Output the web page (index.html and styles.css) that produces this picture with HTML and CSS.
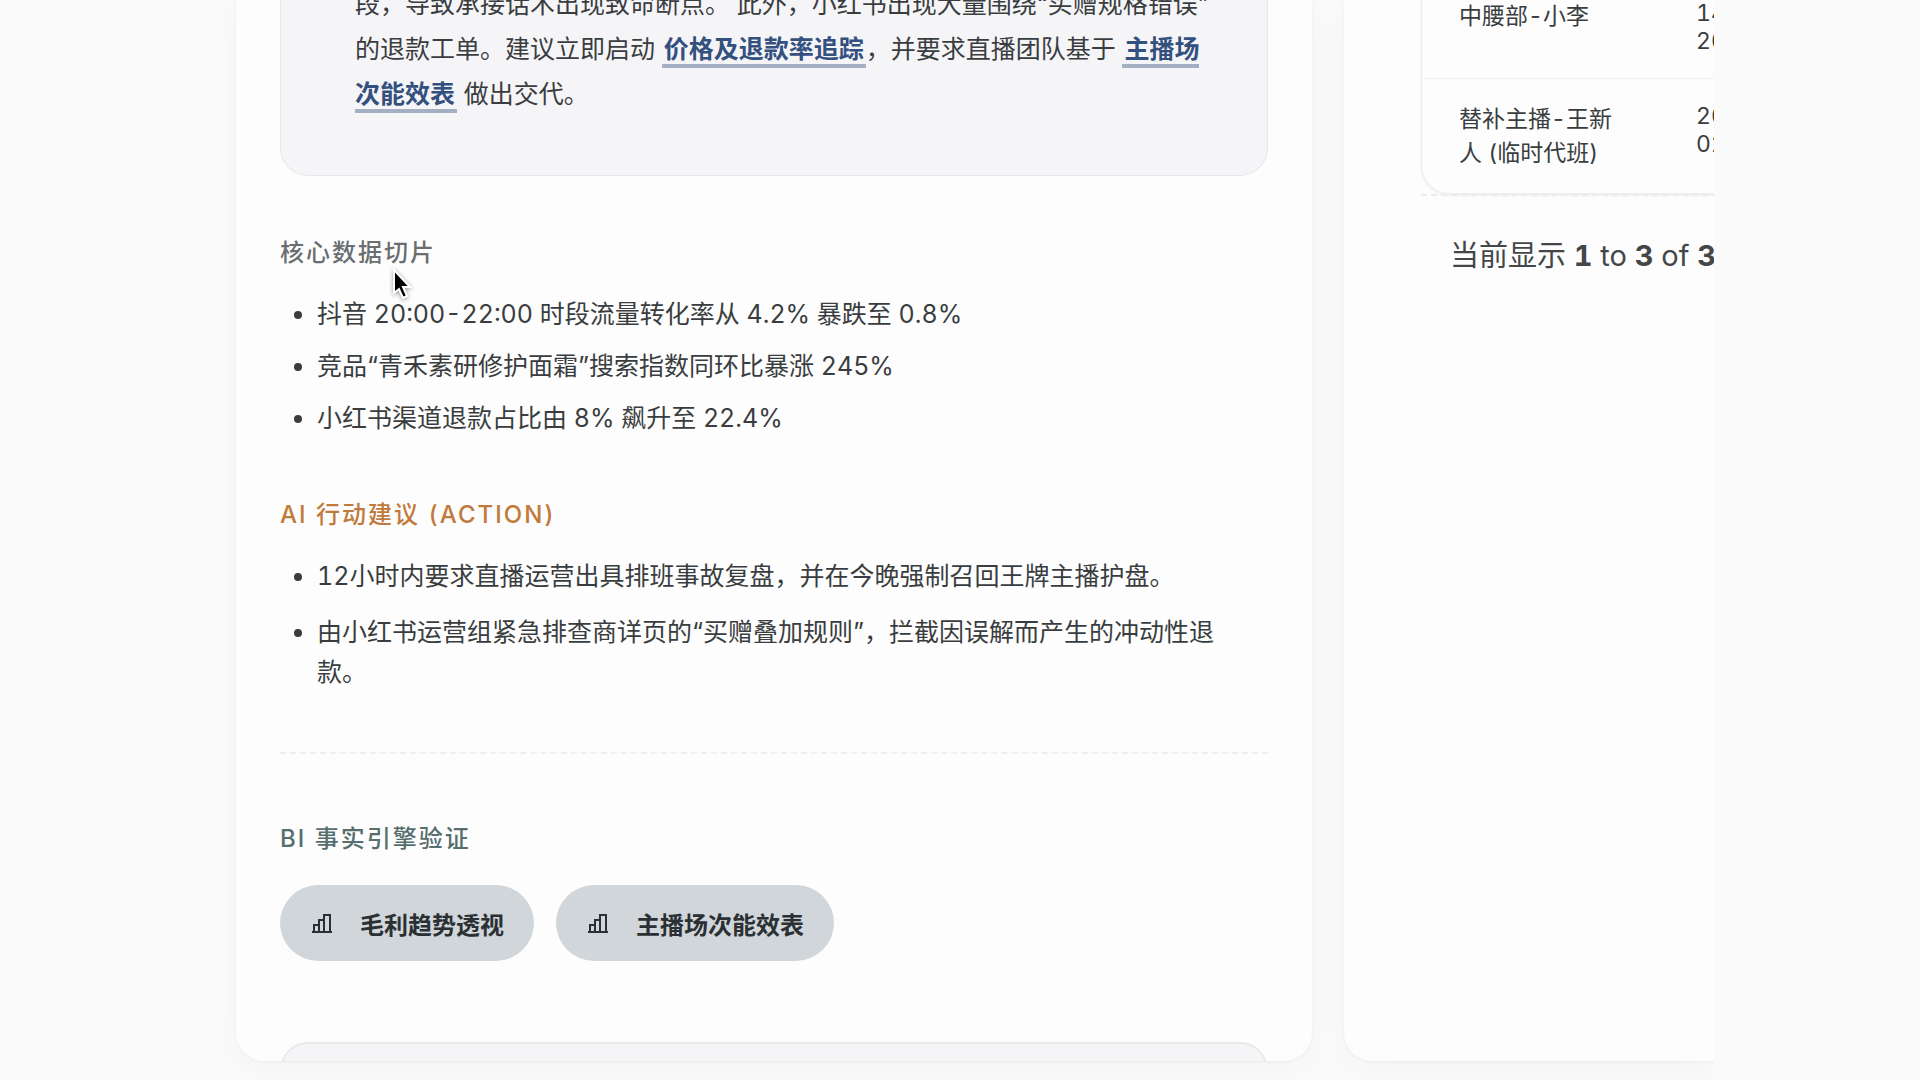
FILE: index.html
```html
<!DOCTYPE html>
<html lang="zh-CN">
<head>
  <meta charset="UTF-8">
  <title>AI 诊断报告</title>
  <link rel="stylesheet" href="styles.css">
</head>
<body>

<main class="stage">
  <section class="card report">
    <div class="summary">
      <p>段，导致承接话术出现致命断点。 此外，小红书出现大量围绕“买赠规格错误”的退款工单。建议立即启动 <a href="#trace">价格及退款率追踪</a>，并要求直播团队基于 <a href="#session">主播场次能效表</a> 做出交代。</p>
    </div>

    <h3 class="section-title">核心数据切片</h3>
    <ul class="facts">
      <li>抖音 20:00-22:00 时段流量转化率从 4.2% 暴跌至 0.8%</li>
      <li>竞品“青禾素研修护面霜”搜索指数同环比暴涨 245%</li>
      <li>小红书渠道退款占比由 8% 飙升至 22.4%</li>
    </ul>

    <h3 class="section-title action">AI 行动建议 (ACTION)</h3>
    <ul class="facts loose">
      <li>12小时内要求直播运营出具排班事故复盘，并在今晚强制召回王牌主播护盘。</li>
      <li>由小红书运营组紧急排查商详页的“买赠叠加规则”，拦截因误解而产生的冲动性退款。</li>
    </ul>

    <div class="verify">
      <h3 class="section-title bi">BI 事实引擎验证</h3>
      <div class="chips">
        <button type="button" class="chip">
          <svg viewBox="0 0 20 20" aria-hidden="true"><path d="M0 19h20M2 19v-7h5M7 19V7h5M12 19V2h6v17"/></svg>
          毛利趋势透视
        </button>
        <button type="button" class="chip">
          <svg viewBox="0 0 20 20" aria-hidden="true"><path d="M0 19h20M2 19v-7h5M7 19V7h5M12 19V2h6v17"/></svg>
          主播场次能效表
        </button>
      </div>
    </div>

    <div class="next-block"></div>
  </section>

  <section class="card detail">
    <div class="table-wrap">
      <table>
        <tr>
          <td>中腰部-小李</td>
          <td class="time">14:00-<br>20:00</td>
        </tr>
        <tr>
          <td>替补主播-王新人 (临时代班)</td>
          <td class="time">20:00-<br>02:00</td>
        </tr>
      </table>
    </div>
    <div class="pager">当前显示 <b>1</b> to <b>3</b> of <b>3</b></div>
  </section>
</main>

<!-- mouse pointer -->
<svg class="pointer" viewBox="0 0 20 32" aria-hidden="true"><path d="M2 2v23l5-4 4 9 4-2-4-9h7z"/></svg>

</body>
</html>
```
FILE: styles.css
```css
* { box-sizing: border-box; }

body {
  margin: 0;
  background: #fafafa;
  color: #3a3d3f;
  font-family: Inter, "Noto Sans CJK SC", sans-serif;
  font-size: 25px;
  font-variant-numeric: tabular-nums;
  line-height: 40px;
  overflow: hidden;
}

.stage {
  display: grid;
  grid-template-columns: minmax(0, 1fr) 370px;
  gap: 32px;
  height: 100vh;
  margin: 0 206px;
  padding: 0 0 19px 30px;
  overflow: hidden;
}

.card {
  background: #fdfdfd;
  border-radius: 0 0 28px 28px;
  box-shadow: 0 6px 28px rgba(0, 0, 0, 0.03), 0 1px 3px rgba(0, 0, 0, 0.04);
  overflow: hidden;
}

.report { padding: 0 44px; }

/* report is scrolled, the top of the summary is cut off */
.summary {
  margin-top: -18px;
  padding: 0 50px 58px 74px;
  background: #f5f5f8;
  border: 1px solid #e8e8eb;
  border-top: none;
  border-radius: 0 0 28px 28px;
}
.summary p { margin: 0; line-height: 45px; }
.summary a {
  color: #34507f;
  font-weight: 600;
  text-decoration: none;
  padding: 0 2px;
  border-bottom: 4px solid #a5afc4;
}

.section-title {
  margin: 0;
  font-size: 24px;
  font-weight: 500;
  letter-spacing: 2px;
  line-height: 40px;
  color: #6a6e71;
}
.summary + .section-title { margin-top: 57px; }
.action { margin-top: 57px; color: #c07a3c; }
.bi { color: #566e6e; }

.facts { margin: 21px 0 0; padding: 0 20px 0 37px; }
.facts li + li { margin-top: 12px; }
.loose li + li { margin-top: 16px; }

.verify {
  margin-top: 60px;
  padding-top: 65px;
  border-top: 2px dashed #f0f0f1;
}
.chips { display: flex; gap: 22px; margin-top: 26px; }
.chip {
  display: flex;
  align-items: center;
  gap: 28px;
  height: 76px;
  padding: 0 30px 0 32px;
  border: none;
  border-radius: 38px;
  background: #d1d6da;
  color: #2a3033;
  font-family: inherit;
  font-size: 24px;
  font-weight: 700;
  cursor: pointer;
}
.chip svg {
  width: 20px;
  height: 20px;
  fill: none;
  stroke: #2a3033;
  stroke-width: 2;
}

.next-block {
  height: 120px;
  margin-top: 81px;
  background: #f5f5f7;
  border: 2px solid #e9e9eb;
  border-radius: 28px;
}

.detail { border-bottom-right-radius: 0; padding-left: 77px; }

.table-wrap {
  width: 640px;
  margin-top: -24px;
  border: 1px solid #ececee;
  border-top: none;
  border-radius: 0 0 28px 28px;
  box-shadow: 0 2px 3px rgba(0, 0, 0, 0.05);
}
table { width: 100%; border-collapse: collapse; table-layout: fixed; }
td {
  padding: 23px 37px;
  vertical-align: top;
  font-size: 23px;
  line-height: 34px;
}
td:first-child { width: 237px; }
tr + tr td { border-top: 1px solid #f0f0f1; }
.time { line-height: 28px; white-space: nowrap; }

.pager {
  width: 640px;
  padding: 40px 29px;
  border-top: 2px dashed #ececee;
  color: #444648;
  font-size: 29px;
}

.pointer {
  position: absolute;
  left: 392px;
  top: 268px;
  width: 20px;
  height: 32px;
  fill: #000;
  stroke: #fff;
  stroke-width: 2;
  filter: drop-shadow(0 1px 2px rgba(0, 0, 0, 0.4));
}
```
